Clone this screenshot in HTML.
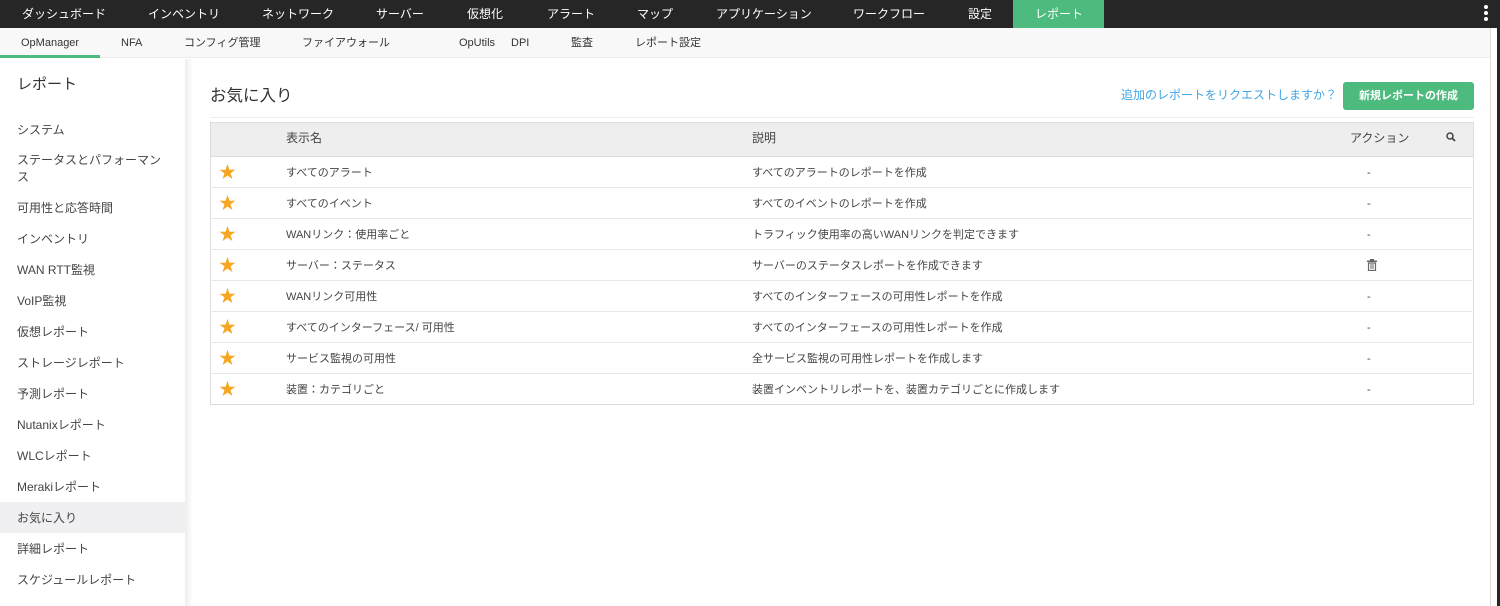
<!DOCTYPE html>
<html><head><meta charset="utf-8"><style>
*{margin:0;padding:0;box-sizing:border-box}
body{width:1500px;height:606px;overflow:hidden;background:#fff;font-family:"Liberation Sans","Noto Sans CJK JP",sans-serif;color:#333;position:relative}
.a{position:absolute;white-space:nowrap;line-height:16px}
#top{position:absolute;left:0;top:0;width:1500px;height:28px;background:#262626}
#top .a{color:#fff;font-size:12px;top:6px}
#sub{position:absolute;left:0;top:28px;width:1497px;height:30px;background:#f8f8f8;border-bottom:1px solid #ececec}
#sub .a{font-size:11px;top:7px;color:#333}
#side .a{font-size:12px;color:#444}
.row{position:absolute;left:210px;width:1264px;height:31px;border-bottom:1px solid #e8e8e8;font-size:11px;color:#444}
.row span{position:absolute;top:8px;white-space:nowrap;line-height:16px}
.row span.star{color:#f5a623;font-size:17px;top:7px;left:9px;line-height:18px}
</style></head><body>
<div id="top">
<div class="a" style="left:22px">ダッシュボード</div>
<div class="a" style="left:148px">インベントリ</div>
<div class="a" style="left:262px">ネットワーク</div>
<div class="a" style="left:376px">サーバー</div>
<div class="a" style="left:467px">仮想化</div>
<div class="a" style="left:547px">アラート</div>
<div class="a" style="left:637px">マップ</div>
<div class="a" style="left:716px">アプリケーション</div>
<div class="a" style="left:853px">ワークフロー</div>
<div class="a" style="left:968px">設定</div>
<div style="position:absolute;left:1013px;top:0;width:91px;height:28px;background:#4cbb7d"></div>
<div class="a" style="left:1035px">レポート</div>
<div style="position:absolute;left:1484px;top:5px;width:4px;height:4px;border-radius:2px;background:#fff;box-shadow:0 6px 0 #fff,0 12px 0 #fff"></div>
</div>
<div id="sub">
<div class="a" style="left:21px">OpManager</div>
<div class="a" style="left:121px">NFA</div>
<div class="a" style="left:184px">コンフィグ管理</div>
<div class="a" style="left:302px">ファイアウォール</div>
<div class="a" style="left:459px">OpUtils</div>
<div class="a" style="left:511px">DPI</div>
<div class="a" style="left:571px">監査</div>
<div class="a" style="left:635px">レポート設定</div>
<div style="position:absolute;left:0;top:27px;width:100px;height:3px;background:#4cbb7d"></div>
</div>
<div style="position:absolute;left:1490px;top:28px;width:10px;height:578px;background:#fff;border-left:1px solid #ddd"></div>
<div style="position:absolute;left:1497px;top:28px;width:3px;height:578px;background:#262626"></div>
<div style="position:absolute;left:185px;top:59px;width:8px;height:547px;background:linear-gradient(90deg,#eee,#fff)"></div>
<div id="side">
<div class="a" style="left:17px;top:75px;font-size:15px;color:#333;line-height:20px">レポート</div>
<div class="a" style="left:17px;top:122px">システム</div>
<div class="a" style="left:17px;top:152px">ステータスとパフォーマン</div>
<div class="a" style="left:17px;top:169px">ス</div>
<div class="a" style="left:17px;top:200px">可用性と応答時間</div>
<div class="a" style="left:17px;top:231px">インベントリ</div>
<div class="a" style="left:17px;top:262px">WAN RTT監視</div>
<div class="a" style="left:17px;top:293px">VoIP監視</div>
<div class="a" style="left:17px;top:324px">仮想レポート</div>
<div class="a" style="left:17px;top:355px">ストレージレポート</div>
<div class="a" style="left:17px;top:386px">予測レポート</div>
<div class="a" style="left:17px;top:417px">Nutanixレポート</div>
<div class="a" style="left:17px;top:448px">WLCレポート</div>
<div class="a" style="left:17px;top:479px">Merakiレポート</div>
<div style="position:absolute;left:0;top:502px;width:185px;height:31px;background:#f0f0f2"></div>
<div class="a" style="left:17px;top:510px">お気に入り</div>
<div class="a" style="left:17px;top:541px">詳細レポート</div>
<div class="a" style="left:17px;top:572px">スケジュールレポート</div>
</div>
<div class="a" style="left:210px;top:85px;font-size:16.5px;color:#333;line-height:22px">お気に入り</div>
<div class="a" style="left:1121px;top:87px;font-size:12px;color:#3fa6e6">追加のレポートをリクエストしますか？</div>
<div style="position:absolute;left:1343px;top:82px;width:131px;height:28px;background:#4cbb7d;border-radius:3px;color:#fff;font-size:11px;text-align:center;line-height:28px;font-weight:bold">新規レポートの作成</div>
<div style="position:absolute;left:210px;top:117px;width:1264px;height:1px;background:#eee"></div>
<div style="position:absolute;left:210px;top:122px;width:1264px;height:283px;border:1px solid #ddd"></div>
<div style="position:absolute;left:211px;top:123px;width:1262px;height:34px;background:#eeeeee;border-bottom:1px solid #ddd;font-size:12px;color:#444">
<span class="a" style="left:75px;top:7px">表示名</span>
<span class="a" style="left:541px;top:7px">説明</span>
<span class="a" style="left:1139px;top:7px">アクション</span>
<svg class="a" style="left:1235px;top:9px" width="10" height="10" viewBox="0 0 10 10"><circle cx="4" cy="4" r="3" fill="none" stroke="#444" stroke-width="1.5"/><path d="M6 6l3 3" stroke="#444" stroke-width="1.8"/></svg>
</div>
<div class="row" style="top:157px"><span class="star">★</span><span style="left:76px">すべてのアラート</span><span style="left:542px">すべてのアラートのレポートを作成</span><span style="left:1157px">-</span></div>
<div class="row" style="top:188px"><span class="star">★</span><span style="left:76px">すべてのイベント</span><span style="left:542px">すべてのイベントのレポートを作成</span><span style="left:1157px">-</span></div>
<div class="row" style="top:219px"><span class="star">★</span><span style="left:76px">WANリンク：使用率ごと</span><span style="left:542px">トラフィック使用率の高いWANリンクを判定できます</span><span style="left:1157px">-</span></div>
<div class="row" style="top:250px"><span class="star">★</span><span style="left:76px">サーバー：ステータス</span><span style="left:542px">サーバーのステータスレポートを作成できます</span><svg style="position:absolute;left:1157px;top:9px" width="10" height="12" viewBox="0 0 10 12"><rect x="0" y="1.5" width="10" height="1.5" fill="#666"/><rect x="3" y="0" width="4" height="2" fill="#666"/><path d="M1.5 4h7v7.5h-7z" fill="none" stroke="#666" stroke-width="1.2"/><path d="M4 5v5M6 5v5" stroke="#666"/></svg></div>
<div class="row" style="top:281px"><span class="star">★</span><span style="left:76px">WANリンク可用性</span><span style="left:542px">すべてのインターフェースの可用性レポートを作成</span><span style="left:1157px">-</span></div>
<div class="row" style="top:312px"><span class="star">★</span><span style="left:76px">すべてのインターフェース/ 可用性</span><span style="left:542px">すべてのインターフェースの可用性レポートを作成</span><span style="left:1157px">-</span></div>
<div class="row" style="top:343px"><span class="star">★</span><span style="left:76px">サービス監視の可用性</span><span style="left:542px">全サービス監視の可用性レポートを作成します</span><span style="left:1157px">-</span></div>
<div class="row" style="top:374px;border-bottom:none"><span class="star">★</span><span style="left:76px">装置：カテゴリごと</span><span style="left:542px">装置インベントリレポートを、装置カテゴリごとに作成します</span><span style="left:1157px">-</span></div>
</body></html>
